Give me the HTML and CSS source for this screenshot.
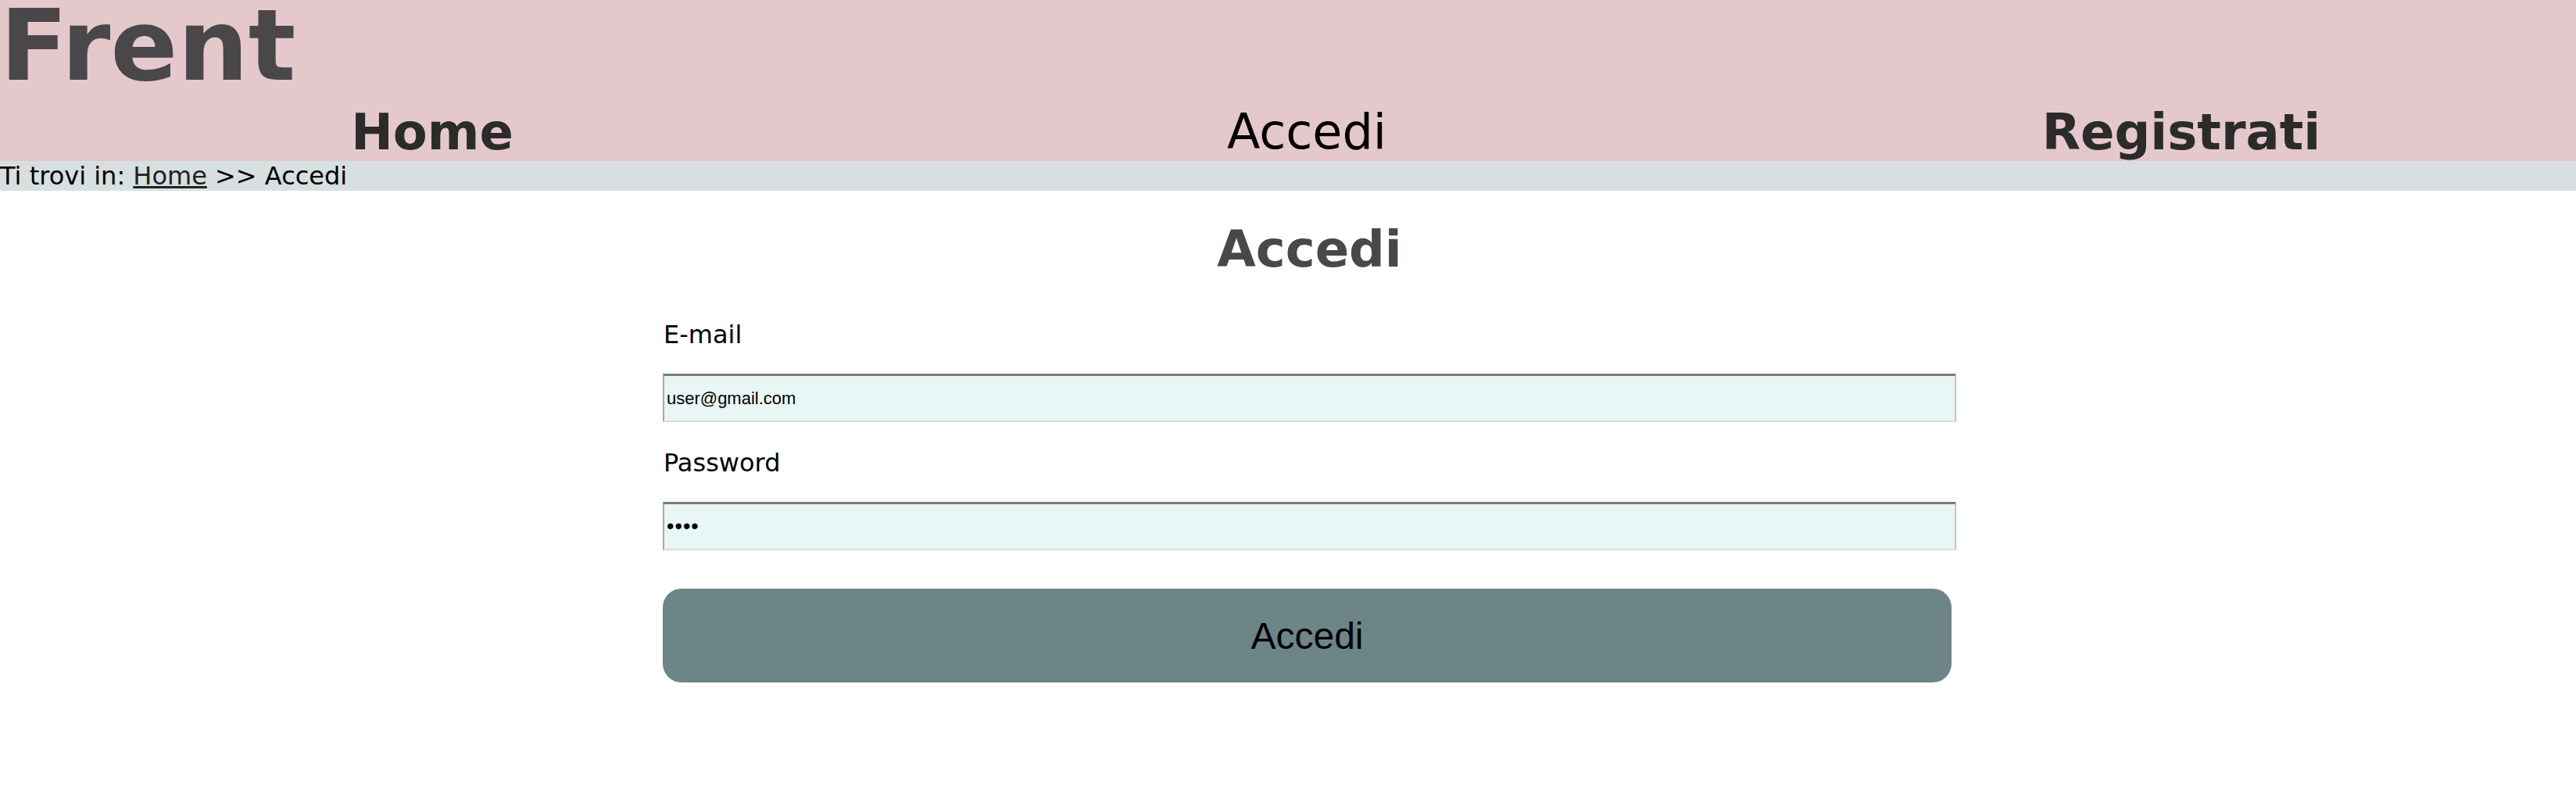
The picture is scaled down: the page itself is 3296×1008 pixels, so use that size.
FILE: index.html
```html
<!DOCTYPE html>
<html lang="it">
<head>
<meta charset="utf-8">
<title>Frent - Accedi</title>
<link rel="stylesheet" href="styles.css">
</head>
<body>
<header class="site-header">
  <h1 class="logo">Frent</h1>
  <nav class="main-nav">
    <a class="nav-link" href="#">Home</a>
    <span class="nav-link current">Accedi</span>
    <a class="nav-link" href="#">Registrati</a>
  </nav>
</header>
<div class="breadcrumb">Ti trovi in: <a href="#">Home</a> &gt;&gt; Accedi</div>
<main class="main">
  <form class="login">
    <h2 class="login-title">Accedi</h2>
    <label class="field-label" for="email">E-mail</label>
    <input class="field-input" id="email" type="email" value="user@gmail.com">
    <label class="field-label" for="password">Password</label>
    <input class="field-input field-password" id="password" type="password" value="1234">
    <button class="submit" type="button">Accedi</button>
  </form>
</main>
</body>
</html>
```
FILE: styles.css
```css
html, body {
  margin: 0;
  padding: 0;
  background: #ffffff;
}
body {
  font-family: "DejaVu Sans", Verdana, sans-serif;
  color: #000;
}
.site-header {
  background: #e5c8cc;
  overflow: hidden;
}
.logo {
  margin: 0;
  font-size: 127px;
  line-height: 116px;
  font-weight: bold;
  color: #4a474a;
}
.main-nav {
  display: grid;
  grid-template-columns: repeat(3, 1106px);
  column-gap: 13px;
  margin-top: 16px;
}
.nav-link {
  text-align: center;
  font-size: 64px;
  font-weight: bold;
  color: #2b2b2b;
  text-decoration: none;
}
.nav-link.current {
  font-weight: normal;
  font-size: 62px;
  line-height: 74px;
  color: #000;
}
.breadcrumb {
  background: #d7dfe0;
  font-size: 32px;
  color: #000;
}
.breadcrumb a {
  color: #222;
  text-decoration: underline;
}
.main {
  padding-left: 55px;
}
.login {
  width: 1655px;
  margin: 0 auto;
  display: flex;
  flex-direction: column;
}
.login-title {
  margin: 38px 0 53px;
  text-align: center;
  font-size: 64px;
  font-weight: bold;
  color: #4a474a;
}
.field-label {
  font-size: 32px;
  padding-left: 1px;
  margin-bottom: 31px;
}
.field-input {
  box-sizing: border-box;
  width: 100%;
  height: 62px;
  margin: 0 0 33px;
  padding: 0 3px;
  background: #e8f6f5;
  border-style: solid;
  border-width: 3px 2px 2px 2px;
  border-color: #7a7a7a #c4c4c4 #dcdcdc #a8a8a8;
  font-family: "Liberation Sans", Arial, sans-serif;
  font-size: 22px;
  color: #000;
}
.field-password {
  margin-bottom: 49px;
  font-size: 27px;
  letter-spacing: 1px;
}
.submit {
  width: calc(100% - 6px);
  height: 120px;
  border: none;
  border-radius: 24px;
  background: #6d8587;
  font-family: "Liberation Sans", Arial, sans-serif;
  font-size: 48px;
  color: #000;
  padding: 0;
}
```
